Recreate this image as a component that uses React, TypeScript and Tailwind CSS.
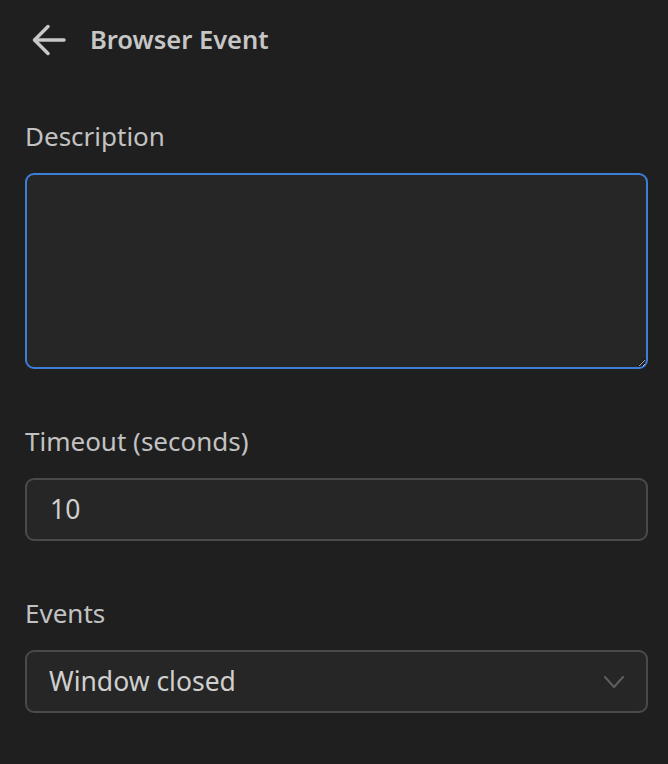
const font = { fontFamily: '"Noto Sans", "Open Sans", sans-serif' }

export default function App() {
  return (
    <div className="w-[668px] h-[764px] bg-[#1f1f1f] text-[#cccccc] overflow-hidden" style={font}>
      <div className="flex items-center h-[80px] pl-[32px]">
        <button type="button" aria-label="Back" className="text-[#c8c8c8]">
          <svg width="34" height="32" viewBox="0 0 34 32" fill="none" stroke="currentColor" strokeWidth="3.5" strokeLinecap="round" strokeLinejoin="round">
            <path d="M16 2.5 2.5 16 16 29.5" />
            <path d="M3 16H32" />
          </svg>
        </button>
        <h1 className="ml-[24px] text-[25.5px] font-semibold text-[#c6c6c6] leading-none">Browser Event</h1>
      </div>

      <div className="flex flex-col pl-[25px] pr-[20px] pt-[37px]">
        <label className="text-[26px] leading-[38px] text-[#c2c2c2]">Description</label>
        <textarea
          className="mt-[18px] h-[196px] w-full rounded-[9px] border-2 border-[#3b7fd6] bg-[#262626] outline-none resize-y"
          defaultValue=""
        />

        <label className="mt-[53px] text-[26px] leading-[38px] text-[#c2c2c2]">Timeout (seconds)</label>
        <div className="mt-[18px] flex items-center h-[63px] rounded-[9px] border-2 border-[#4a4a4a] bg-[#262626] px-[23px]">
          <span className="text-[26.5px] text-[#cfcfcf]">10</span>
        </div>

        <label className="mt-[53px] text-[26px] leading-[38px] text-[#c2c2c2]">Events</label>
        <div className="mt-[18px] flex items-center justify-between h-[63px] rounded-[9px] border-2 border-[#4a4a4a] bg-[#262626] pl-[22px] pr-[22px]">
          <span className="text-[26.5px] text-[#cfcfcf]">Window closed</span>
          <svg width="20" height="12" viewBox="0 0 20 12" fill="none" stroke="#5e5e5e" strokeWidth="2" strokeLinecap="round" strokeLinejoin="round">
            <path d="M1 1l9 10 9-10" />
          </svg>
        </div>
      </div>
    </div>
  )
}
